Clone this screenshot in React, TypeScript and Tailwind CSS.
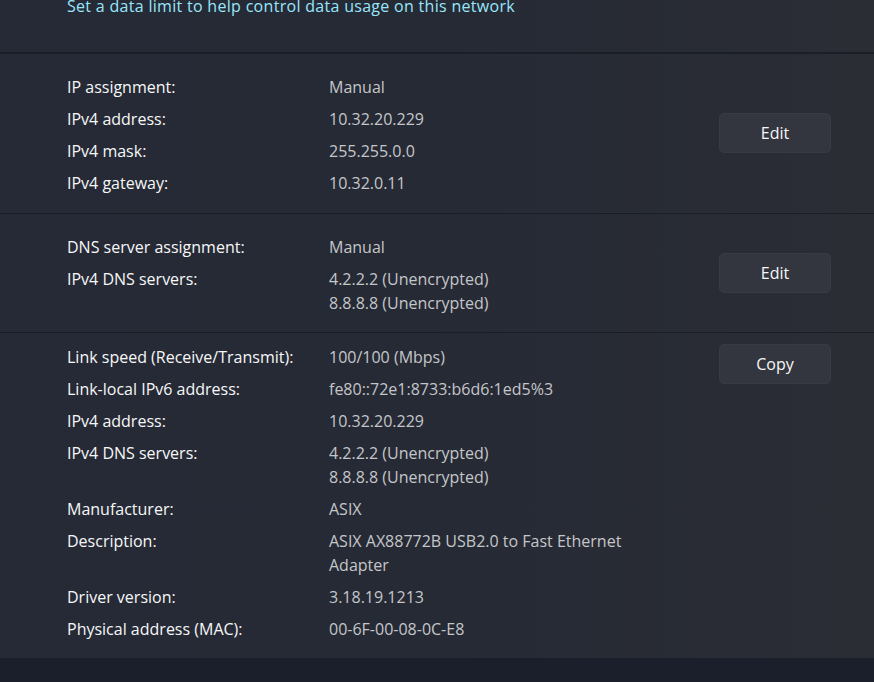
import React from "react";

type Row = { label: string; value: string[] };

const section1: Row[] = [
  { label: "IP assignment:", value: ["Manual"] },
  { label: "IPv4 address:", value: ["10.32.20.229"] },
  { label: "IPv4 mask:", value: ["255.255.0.0"] },
  { label: "IPv4 gateway:", value: ["10.32.0.11"] },
];

const section2: Row[] = [
  { label: "DNS server assignment:", value: ["Manual"] },
  { label: "IPv4 DNS servers:", value: ["4.2.2.2 (Unencrypted)", "8.8.8.8 (Unencrypted)"] },
];

const section3: Row[] = [
  { label: "Link speed (Receive/Transmit):", value: ["100/100 (Mbps)"] },
  { label: "Link-local IPv6 address:", value: ["fe80::72e1:8733:b6d6:1ed5%3"] },
  { label: "IPv4 address:", value: ["10.32.20.229"] },
  { label: "IPv4 DNS servers:", value: ["4.2.2.2 (Unencrypted)", "8.8.8.8 (Unencrypted)"] },
  { label: "Manufacturer:", value: ["ASIX"] },
  { label: "Description:", value: ["ASIX AX88772B USB2.0 to Fast Ethernet", "Adapter"] },
  { label: "Driver version:", value: ["3.18.19.1213"] },
  { label: "Physical address (MAC):", value: ["00-6F-00-08-0C-E8"] },
];

function Rows({ rows }: { rows: Row[] }) {
  return (
    <div className="flex flex-col gap-2">
      {rows.map((r, i) => (
        <div key={i} className="flex">
          <div className="w-[262px] shrink-0 text-[#f7f7f7] leading-6 whitespace-nowrap">{r.label}</div>
          <div className="text-[#c5c6c9] leading-6 whitespace-nowrap">
            {r.value.map((v, j) => (
              <div key={j}>{v}</div>
            ))}
          </div>
        </div>
      ))}
    </div>
  );
}

function Btn({ children }: { children: React.ReactNode }) {
  return (
    <button className="w-[112px] h-[40px] rounded-[5px] bg-[#33363e] border border-[#383b43] text-[#f7f7f7] text-[16px] leading-6 shrink-0">
      {children}
    </button>
  );
}

export default function App() {
  return (
    <div
      className="w-[874px] h-[682px] overflow-hidden bg-[#1b1f2b] text-[16px]"
      style={{ fontFamily: '"Segoe UI", "Open Sans", "Noto Sans", sans-serif' }}
    >
      <div className="bg-gradient-to-r from-[#252a36] via-[#262a35] to-[#2a2d34]">
        <div className="h-[52px] overflow-hidden px-[67px]">
          <div className="-mt-[6px] leading-6 tracking-[0.3px] text-[#99e6fb] whitespace-nowrap">
            Set a data limit to help control data usage on this network
          </div>
        </div>
        <div className="h-[2px] bg-[#1a1e27]" />
        <div className="h-[159px] pl-[67px] pr-[43px] flex items-center justify-between">
          <div className="self-start pt-[21px]">
            <Rows rows={section1} />
          </div>
          <div className="-mt-[1px]">
            <Btn>Edit</Btn>
          </div>
        </div>
        <div className="h-[1px] bg-[#1a1e27]" />
        <div className="h-[118px] pl-[67px] pr-[43px] flex items-center justify-between">
          <div className="self-start pt-[21px]">
            <Rows rows={section2} />
          </div>
          <Btn>Edit</Btn>
        </div>
        <div className="h-[1px] bg-[#1a1e27]" />
        <div className="h-[325px] pl-[67px] pr-[43px] pt-[12px] flex items-start justify-between">
          <Rows rows={section3} />
          <div className="-mt-[1px]">
            <Btn>Copy</Btn>
          </div>
        </div>
      </div>
    </div>
  );
}
